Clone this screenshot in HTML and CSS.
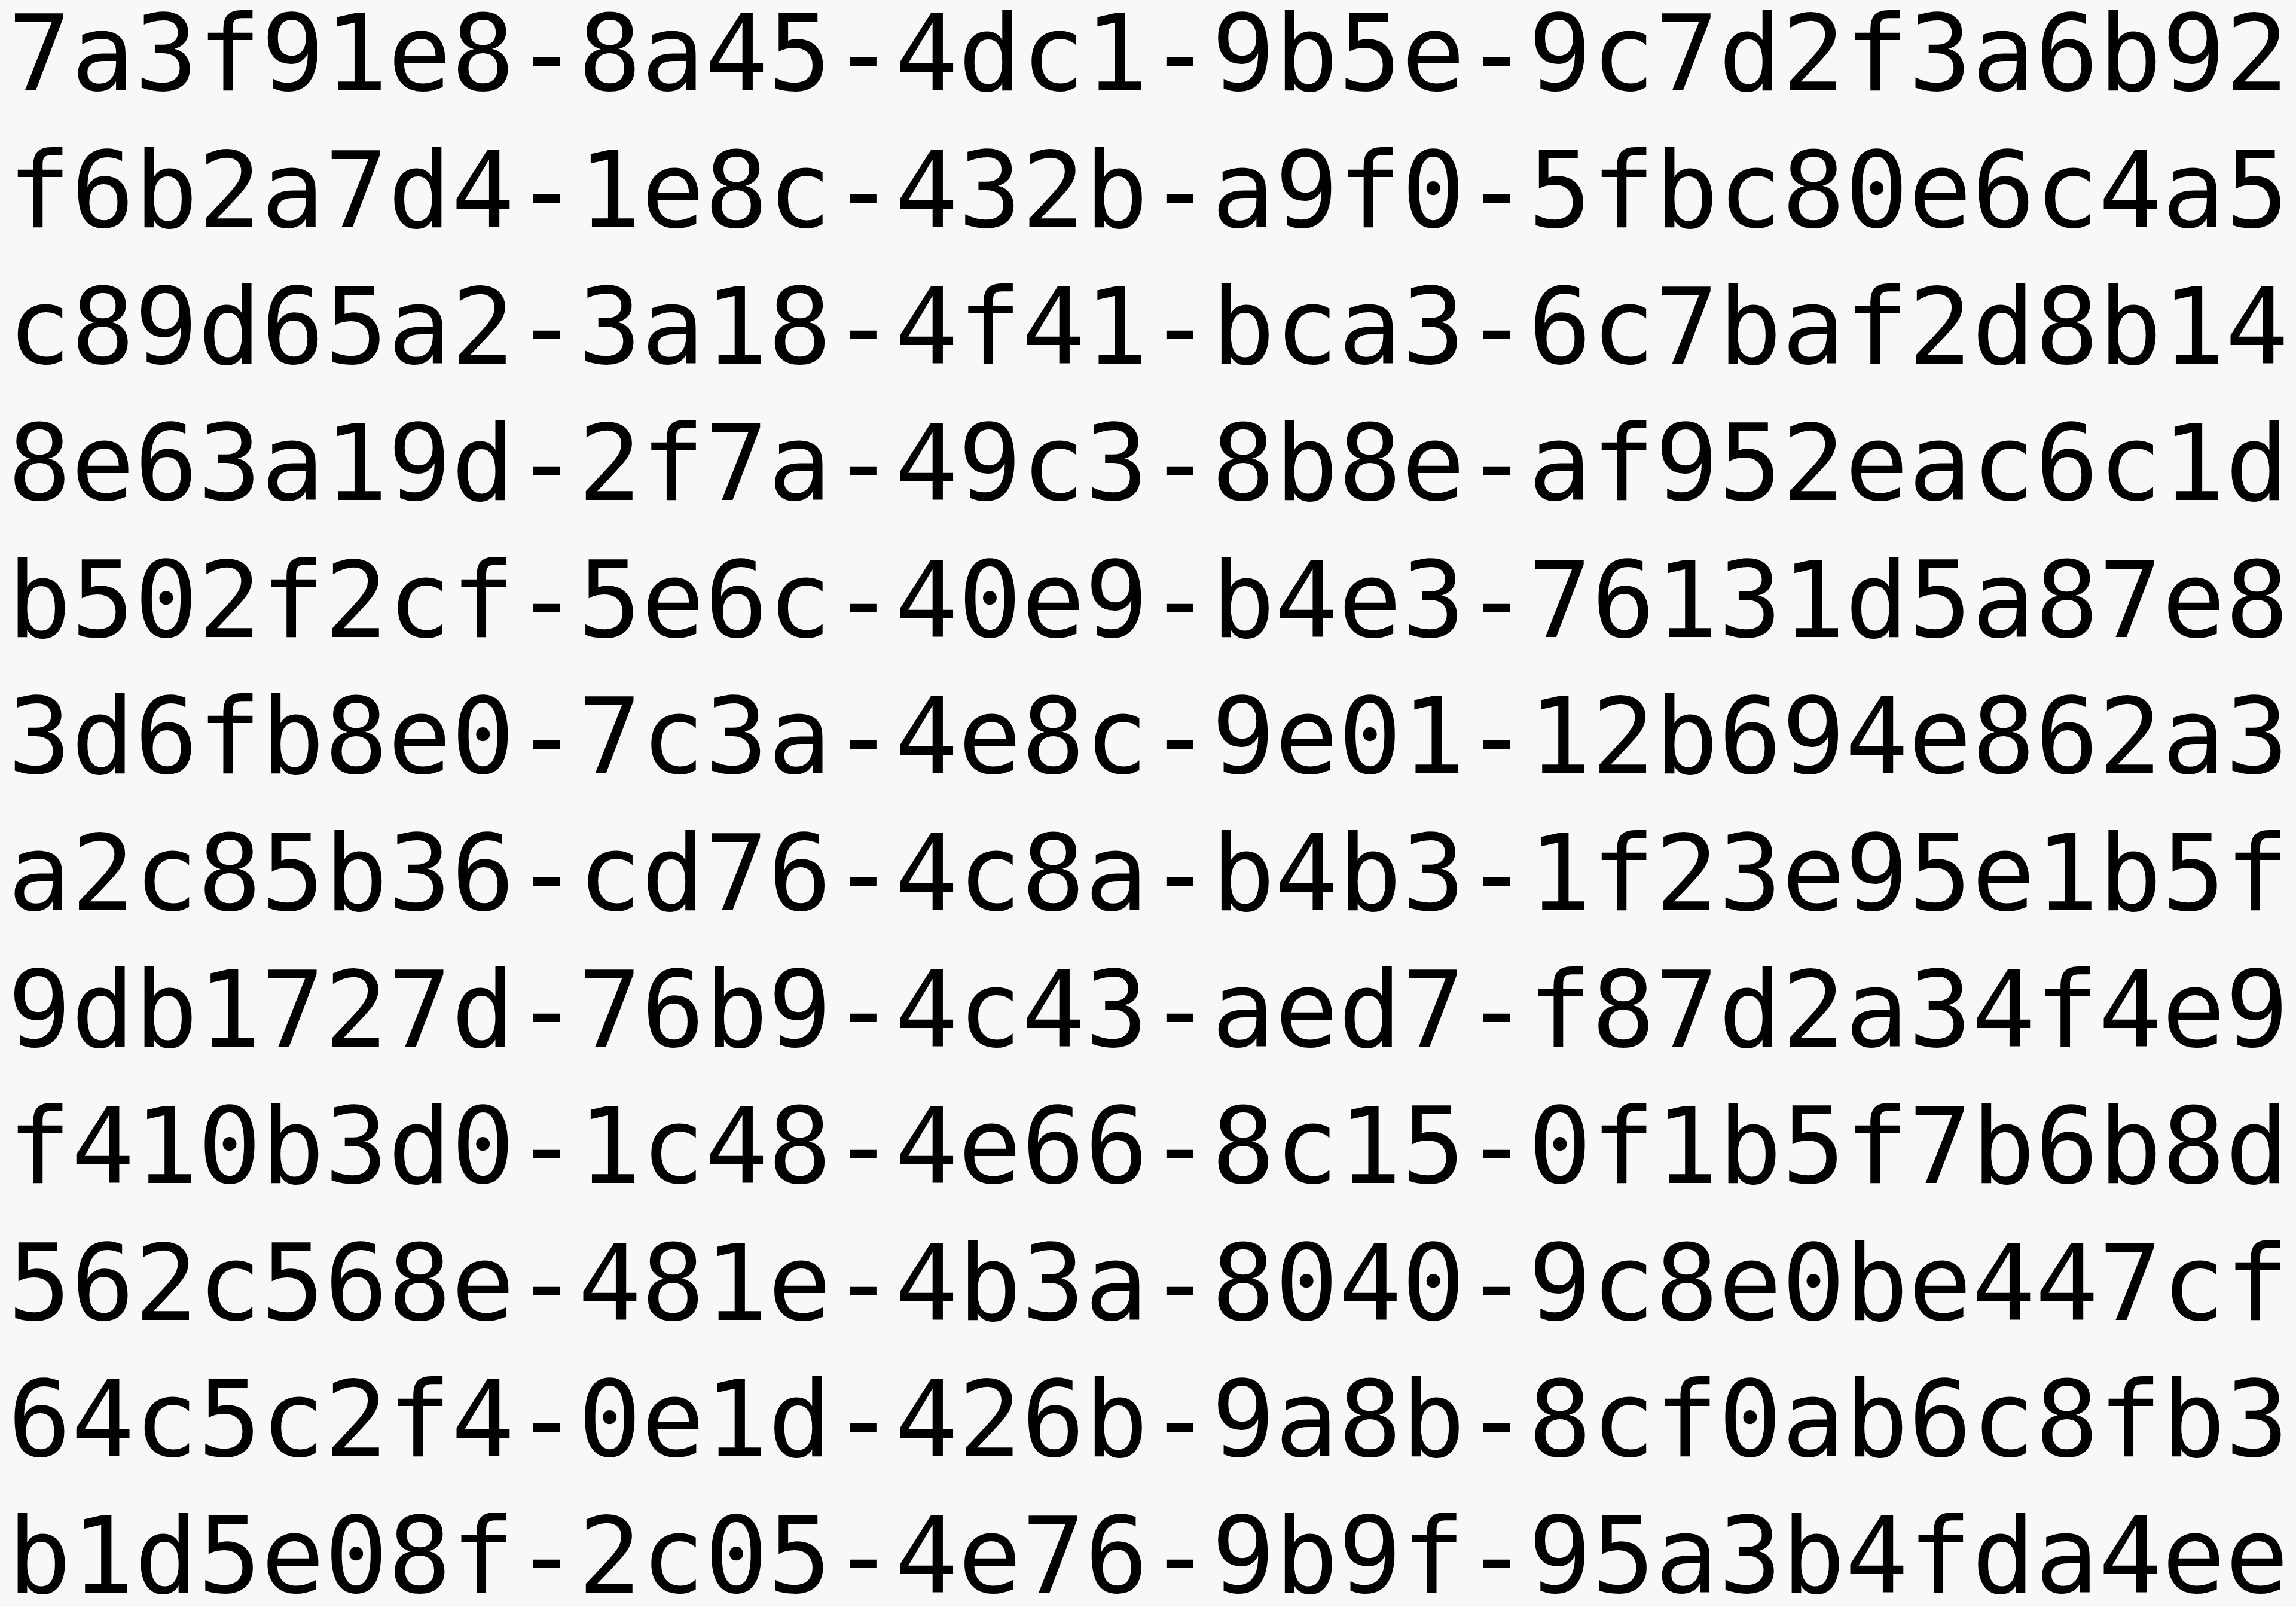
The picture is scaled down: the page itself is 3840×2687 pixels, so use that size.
FILE: index.html
```html
<!DOCTYPE html>
<html>
<head>
<meta charset="utf-8">
<link rel="stylesheet" href="styles.css">
</head>
<body>
<div class="list">
<div class="row">7a3f91e8-8a45-4dc1-9b5e-9c7d2f3a6b92</div>
<div class="row">f6b2a7d4-1e8c-432b-a9f0-5fbc80e6c4a5</div>
<div class="row">c89d65a2-3a18-4f41-bca3-6c7baf2d8b14</div>
<div class="row">8e63a19d-2f7a-49c3-8b8e-af952eac6c1d</div>
<div class="row">b502f2cf-5e6c-40e9-b4e3-76131d5a87e8</div>
<div class="row">3d6fb8e0-7c3a-4e8c-9e01-12b694e862a3</div>
<div class="row">a2c85b36-cd76-4c8a-b4b3-1f23e95e1b5f</div>
<div class="row">9db1727d-76b9-4c43-aed7-f87d2a34f4e9</div>
<div class="row">f410b3d0-1c48-4e66-8c15-0f1b5f7b6b8d</div>
<div class="row">562c568e-481e-4b3a-8040-9c8e0be447cf</div>
<div class="row">64c5c2f4-0e1d-426b-9a8b-8cf0ab6c8fb3</div>
<div class="row">b1d5e08f-2c05-4e76-9b9f-95a3b4fda4ee</div>
</div>
</body>
</html>
```
FILE: styles.css
```css
html, body {
  margin: 0;
  padding: 0;
  background: #f8f8f8;
  overflow: hidden;
}
.list {
  display: flex;
  flex-direction: column;
  gap: 68.4px;
  padding: 11.2px 0 0 13px;
  font-family: "DejaVu Sans Mono", "Liberation Mono", monospace;
  font-size: 176px;
  font-variant-numeric: slashed-zero;
  color: #000;
  white-space: nowrap;
}
.row {
  line-height: 160px;
  height: 160px;
}
```
